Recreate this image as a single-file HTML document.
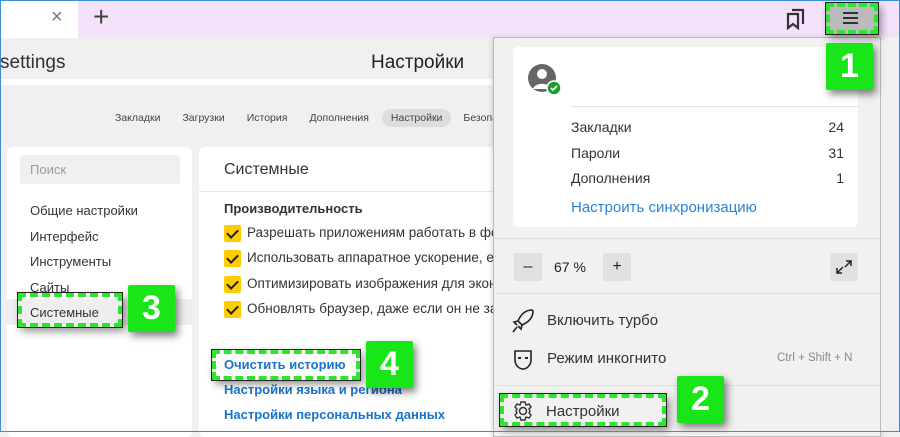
<!DOCTYPE html>
<html><head><meta charset="utf-8"><style>
*{box-sizing:border-box;margin:0;padding:0}
body{width:900px;height:432px;overflow:hidden;font-family:"Liberation Sans","DejaVu Sans",sans-serif;background:#f0f0f0;position:relative;color:#222}
.a{position:absolute}
.dash{position:absolute;border:4px dashed #2ee52e;outline:1px solid #222;box-shadow:3px 4px 8px rgba(0,0,0,.45)}
.lab{position:absolute;background:#19e619;color:#fff;font-weight:bold;font-size:34px;text-align:center;box-shadow:3px 4px 8px rgba(0,0,0,.5);border-radius:2px}
.nav span{margin-right:22px}
.cb{position:absolute;left:224px;width:17px;height:17px;background:#fc0;border-radius:2px}
.cb:after{content:"";position:absolute;left:5px;top:2px;width:5px;height:9px;border:solid #222;border-width:0 2px 2px 0;transform:rotate(45deg)}
.cbt{position:absolute;left:247px;font-size:13.5px;color:#333;white-space:nowrap}
.lnk{position:absolute;left:224px;font-size:13px;color:#1a73cc;font-weight:bold}
</style></head><body>
<div class="a" style="left:0;top:0;width:900px;height:37px;background:#f5e2fa"></div>
<div class="a" style="left:0;top:0;width:78px;height:38px;background:#fff"></div>
<div class="a" style="left:51px;top:6px;font-size:20px;color:#777">×</div>
<div class="a" style="left:93px;top:1px;font-size:28px;color:#444">+</div>
<svg class="a" style="left:785px;top:8px" width="22" height="22" viewBox="0 0 22 22"><path d="M3 6h10v14l-5-4-5 4z M7 2h11v14" fill="none" stroke="#333" stroke-width="2.2"/></svg>
<div class="a" style="left:0;top:38px;width:900px;height:42px;background:#f0f0f0"></div>
<div class="a" style="left:0;top:79px;width:900px;height:6px;background:#fff"></div>
<div class="a" style="left:0;top:52px;font-size:19px;color:#333">settings</div>
<div class="a" style="left:371px;top:52px;font-size:19px;color:#222">Настройки</div>
<div class="a nav" style="left:115px;top:112px;font-size:10.5px;color:#444;white-space:nowrap"><span>Закладки</span><span>Загрузки</span><span>История</span><span>Дополнения</span><span style="background:#ddd;padding:3px 9px;border-radius:10px;margin-left:-9px;margin-right:12px">Настройки</span><span>Безопа</span></div>
<div class="a" style="left:7px;top:147px;width:185px;height:290px;background:#fff;border-radius:6px"></div>
<div class="a" style="left:20px;top:155px;width:160px;height:29px;background:#f0f0f0;border-radius:3px;font-size:13px;color:#999;padding:7px 10px">Поиск</div>
<div class="a" style="left:30px;top:198px;font-size:13px;line-height:25.5px;color:#333">Общие настройки<br>Интерфейс<br>Инструменты<br>Сайты</div>
<div class="a" style="left:7px;top:299px;width:185px;height:26px;background:#eee"></div>
<div class="a" style="left:30px;top:305px;font-size:13px;color:#333">Системные</div>
<div class="a" style="left:199px;top:147px;width:300px;height:290px;background:#fff;border-radius:6px"></div>
<div class="a" style="left:199px;top:191px;width:300px;height:1px;background:#e6e6e6"></div>
<div class="a" style="left:224px;top:161px;font-size:16px;color:#333">Системные</div>
<div class="a" style="left:224px;top:201px;font-size:13px;font-weight:bold;color:#333">Производительность</div>
<div class="cb" style="top:225px"></div><div class="cbt" style="top:225px">Разрешать приложениям работать в фоновом</div>
<div class="cb" style="top:250px"></div><div class="cbt" style="top:250px">Использовать аппаратное ускорение, если в</div>
<div class="cb" style="top:276px"></div><div class="cbt" style="top:276px">Оптимизировать изображения для экономии</div>
<div class="cb" style="top:301px"></div><div class="cbt" style="top:301px">Обновлять браузер, даже если он не запущен</div>
<div class="lnk" style="top:357px">Очистить историю</div>
<div class="lnk" style="top:382px">Настройки языка и региона</div>
<div class="lnk" style="top:407px">Настройки персональных данных</div>
<div class="a" style="left:493px;top:37px;width:388px;height:400px;background:#f1f1f1;border:1px solid #bbb;box-shadow:0 2px 6px rgba(0,0,0,.2)"></div>
<div class="a" style="left:881px;top:40px;width:19px;height:392px;background:#f0f0f0"></div>
<div class="a" style="left:513px;top:47px;width:345px;height:180px;background:#fff;border-radius:5px"></div>
<svg class="a" style="left:527px;top:63px" width="38" height="34" viewBox="0 0 38 34"><circle cx="15" cy="15" r="14" fill="#666"/><circle cx="15" cy="11" r="5" fill="#fff"/><path d="M6 26c2-7 16-7 18 0" fill="#fff"/><circle cx="27" cy="25" r="7" fill="#1a9e2e" stroke="#fff" stroke-width="1.5"/><path d="M24 25l2 2 4-4" stroke="#fff" stroke-width="1.8" fill="none"/></svg>
<div class="a" style="left:571px;top:106px;width:287px;height:1px;background:#e2e2e2"></div>
<div class="a" style="left:571px;top:115px;width:273px;font-size:14px;line-height:25.5px;color:#333"><div>Закладки<span style="float:right">24</span></div><div>Пароли<span style="float:right">31</span></div><div>Дополнения<span style="float:right">1</span></div></div>
<div class="a" style="left:571px;top:199px;font-size:15px;color:#2a84d6">Настроить синхронизацию</div>
<div class="a" style="left:494px;top:238px;width:386px;height:1px;background:#ddd"></div>
<div class="a" style="left:514px;top:253px;width:28px;height:28px;background:#e1e1e1;border-radius:2px;text-align:center;font-size:16px;line-height:27px">–</div>
<div class="a" style="left:554px;top:259px;font-size:14px">67 %</div>
<div class="a" style="left:603px;top:253px;width:28px;height:28px;background:#e1e1e1;border-radius:2px;text-align:center;font-size:16px;line-height:27px">+</div>
<div class="a" style="left:830px;top:253px;width:28px;height:28px;background:#e1e1e1;border-radius:2px"></div>
<svg class="a" style="left:830px;top:253px" width="28" height="28"><path d="M16 8h5v5M21 8l-6 6M12 20H7v-5M7 20l6-6" stroke="#222" stroke-width="1.5" fill="none"/></svg>
<div class="a" style="left:494px;top:293px;width:386px;height:1px;background:#ddd"></div>
<svg class="a" style="left:510px;top:307px" width="26" height="28" viewBox="0 0 26 28"><path d="M22 3c-6 0-11 4-14 11l4 4c7-3 11-8 11-14zM8 14l-4 1 3 3M12 18l-1 4-3-3M7 20l-4 5" stroke="#222" stroke-width="1.6" fill="none"/></svg>
<div class="a" style="left:547px;top:312px;font-size:15px;color:#333">Включить турбо</div>
<svg class="a" style="left:513px;top:349px" width="20" height="22" viewBox="0 0 20 22"><path d="M2 2h16v9c0 5-4 9-8 9s-8-4-8-9z" stroke="#222" stroke-width="1.6" fill="none"/><path d="M5 9h3M12 9h3" stroke="#222" stroke-width="2"/></svg>
<div class="a" style="left:547px;top:350px;font-size:15px;color:#333">Режим инкогнито</div>
<div class="a" style="left:777px;top:352px;font-size:11.5px;color:#888">Ctrl + Shift + N</div>
<div class="a" style="left:494px;top:385px;width:386px;height:1px;background:#ddd"></div>
<svg class="a" style="left:512px;top:400px" width="22" height="22" viewBox="0 0 22 22"><circle cx="11" cy="11" r="3.5" stroke="#333" stroke-width="1.5" fill="none"/><path d="M9 2h4l1 3 3-1 2 3-2 2 1 2-1 2 2 2-2 3-3-1-1 3H9l-1-3-3 1-2-3 2-2-1-2 1-2-2-2 2-3 3 1z" stroke="#333" stroke-width="1.4" fill="none"/></svg>
<div class="a" style="left:546px;top:403px;font-size:15px;color:#333">Настройки</div>
<div class="a" style="left:826px;top:2px;width:52px;height:33px;background:#bbb;border-radius:3px"></div>
<div class="a" style="left:843px;top:12px;width:15px;height:2px;background:#333;box-shadow:0 5px 0 #333,0 10px 0 #333"></div>
<div class="dash" style="left:826px;top:3px;width:52px;height:31px"></div>
<div class="lab" style="left:826px;top:43px;width:47px;height:47px;line-height:47px">1</div>
<div class="dash" style="left:18px;top:293px;width:104px;height:34px"></div>
<div class="lab" style="left:128px;top:285px;width:47px;height:47px;line-height:47px">3</div>
<div class="dash" style="left:212px;top:350px;width:148px;height:30px"></div>
<div class="lab" style="left:366px;top:341px;width:47px;height:47px;line-height:47px">4</div>
<div class="dash" style="left:500px;top:394px;width:166px;height:32px"></div>
<div class="lab" style="left:677px;top:376px;width:47px;height:47px;line-height:47px">2</div>
<div class="a" style="left:0;top:0;width:900px;height:432px;border:1px solid #3b8ed4"></div>
</body></html>
